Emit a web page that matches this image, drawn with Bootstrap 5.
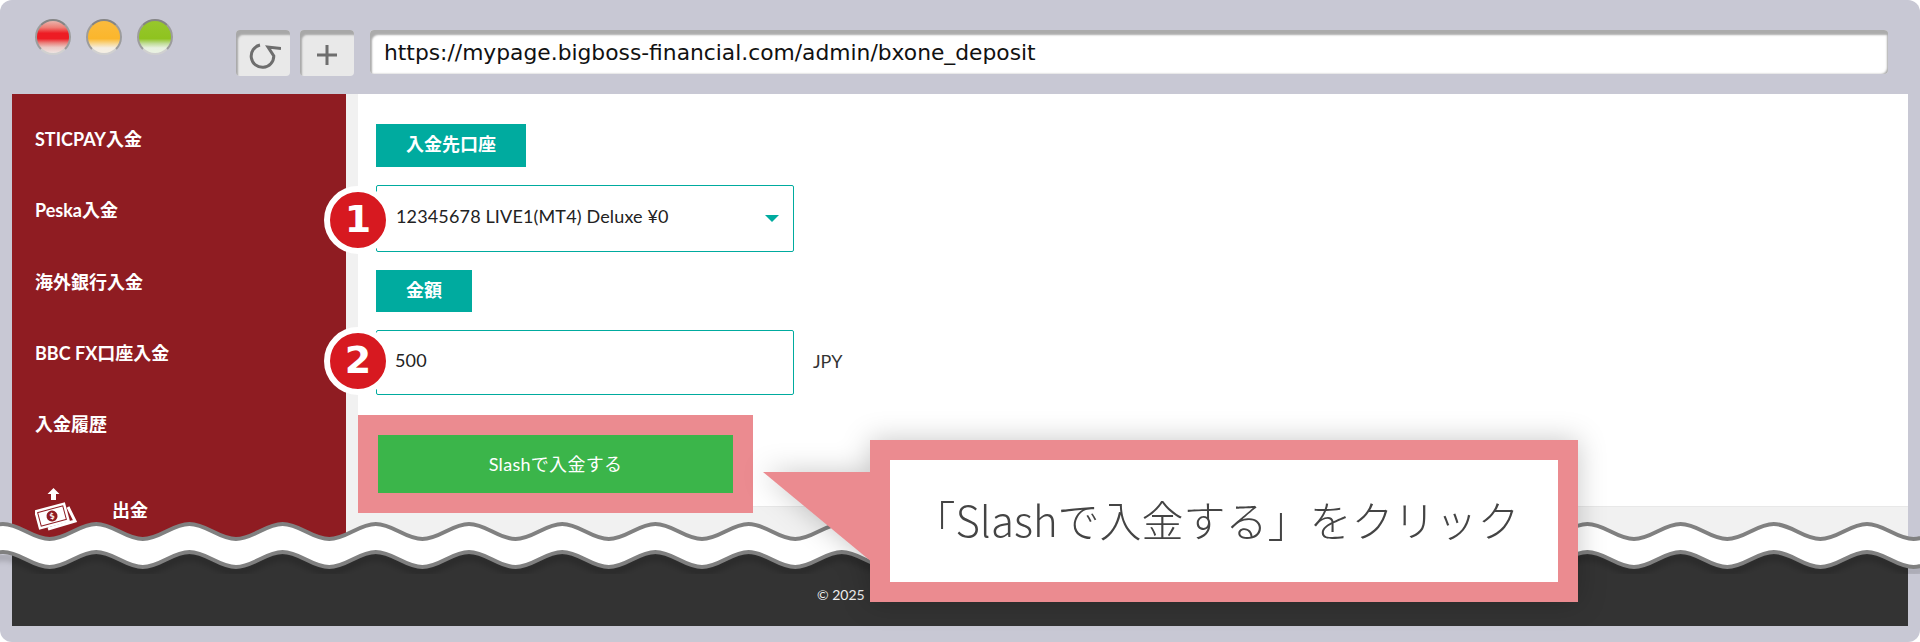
<!DOCTYPE html>
<html lang="ja">
<head>
  <meta charset="UTF-8" />
  <title>bxone_deposit</title>
  <link href="https://cdn.jsdelivr.net/npm/bootstrap@5.3.3/dist/css/bootstrap.min.css" rel="stylesheet"/>
  <style>
    :root {
      --page-font: "Lato", "Noto Sans CJK JP", sans-serif;
      --teal: #00ab9f;
      --pink: #eb8b90;
    }

    body {
      width: 1920px;
      height: 642px;
      overflow: hidden;
      background: #fff;
      font-family: var(--page-font);
    }

    /* browser frame */
    .browser-frame {
      position: relative;
      width: 1920px;
      height: 642px;
      padding: 0 12px 16px;
      background: #c8c8d4;
      border-radius: 12px;
      overflow: hidden;
    }

    .browser-bar { height: 94px; }

    .traffic-lights { width: 224px; padding: 19px 0 0 23px; gap: 15px; }
    .light {
      width: 36px;
      height: 36px;
      border-radius: 50%;
      border: 2px solid;
      border-color: #858585 #9c9c9c #d0d0d0 #9c9c9c;
    }
    .light-red { background: linear-gradient(#e9b4ac 0, #ee7f76 20%, #ed1c24 38%, #ed1c24 55%, #ea7f7a 68%, #ecc8c4 82%, #efe4e2 100%); }
    .light-orange { background: linear-gradient(#fbbb3c 0, #fbb62c 55%, #f8d68c 70%, #f5eee2 84%, #f5efe4 100%); }
    .light-green { background: linear-gradient(#97c72c 0, #8fc31f 55%, #bfdc95 70%, #e8f1e0 84%, #eaf2e2 100%); }

    .bar-btn {
      width: 54px;
      height: 46px;
      margin-top: 30px;
      background: #e9e9e9;
      border-radius: 4px;
      box-shadow: inset 3px 6px 2px -1px #a8a8a8;
    }
    .bar-btn-plus { margin-left: 10px; padding-top: 4px; }
    .address-bar {
      width: 1518px;
      height: 44px;
      margin: 30px 0 0 16px;
      padding: 8px 0 0 14px;
      background: #fff;
      border-radius: 4px;
      box-shadow: inset 4px 7px 2px -2px #acacac, inset -3px -2px 2px -2px #aaa;
      font: 21.8px/30px "DejaVu Sans", sans-serif;
      color: #111;
      white-space: nowrap;
    }

    /* page in the frame */
    .page-body { height: 532px; }
    .page-top { height: 451px; }

    .side-menu {
      width: 334px;
      padding-top: 10px;
      background: #8f1c22;
    }
    .side-link {
      height: 71.25px;
      padding-left: 23px;
      color: #fff;
      font-size: 18px;
      font-weight: 700;
      text-decoration: none;
    }
    .side-link-withdraw { margin-top: 15px; }
    .side-link svg { margin-right: 34px; }

    .main-area {
      flex: 1;
      padding-left: 12px;
      background: #f1f1f1;
    }
    .main-panel {
      height: 413px;
      padding: 30px 0 0 18px;
      background: #fff;
      border-bottom: 1px solid #e8e8e8;
    }

    .field-label {
      width: fit-content;
      height: 43px;
      margin-bottom: 18px;
      padding: 0 30px;
      background: var(--teal);
      color: #fff;
      font-size: 18px;
      font-weight: 700;
      line-height: 41px;
    }
    .amount-label { height: 42px; }
    .select-wrap { width: 418px; }
    .field-box {
      width: 418px;
      border: 1px solid var(--teal);
      border-radius: 2px;
      color: #222;
      font-family: var(--page-font);
      font-size: 18px;
      letter-spacing: .15px;
    }
    .field-box:focus { border-color: var(--teal); box-shadow: none; }
    .deposit-select {
      height: 67px;
      margin-bottom: 18px;
      padding: 0 0 4px 19px;
      background-size: 0 0;
    }
    .select-arrow {
      right: 15px;
      top: 30px;
      width: 0;
      height: 0;
      border-left: 7px solid transparent;
      border-right: 7px solid transparent;
      border-top: 7px solid var(--teal);
    }
    .deposit-input {
      height: 65px;
      padding: 0 0 6px 18px;
    }
    .unit-text { margin: 0 0 2px 19px; color: #333; font-size: 18px; }

    .submit-wrap { width: 355px; margin: 40px 0 0 2px; }
    .submit-btn {
      width: 355px;
      height: 58px;
      background: #3bb54a;
      border: 0;
      border-radius: 0;
      color: #fff;
      font-size: 18px;
      letter-spacing: .3px;
    }

    .page-footer {
      height: 81px;
      padding: 39px 0 0 805px;
      background: #333;
      color: #eee;
      font-size: 14px;
    }

    /* annotations laid over the page */
    .step-badge {
      position: absolute;
      left: 324px;
      width: 68px;
      height: 68px;
      border: 6px solid #fff;
      border-radius: 50%;
      background: #d71920;
      color: #fff;
      font: 700 38px/54px "DejaVu Sans", sans-serif;
      text-align: center;
    }
    .step-one { top: 186px; }
    .step-two { top: 327px; }

    .pink-frame {
      position: absolute;
      inset: -20px;
      border: 20px solid var(--pink);
      pointer-events: none;
    }

    .break-wave { position: absolute; left: 0; top: 500px; }

    .callout {
      position: absolute;
      left: 870px;
      top: 440px;
      width: 708px;
      height: 162px;
      filter: drop-shadow(0 0 14px rgba(0, 0, 0, .22));
    }
    .callout-tail {
      position: absolute;
      left: -107px;
      top: 32px;
      width: 110px;
      height: 91px;
      background: var(--pink);
      clip-path: polygon(0 0, 100% 0, 100% 100%);
    }
    .callout-box {
      position: relative;
      height: 100%;
      padding-right: 15px;
      border: 20px solid var(--pink);
      background: #fff;
      color: #444;
      font: 300 42px/118px "Noto Sans CJK JP", sans-serif;
      text-align: center;
      white-space: nowrap;
    }
  </style>
</head>
<body>

  <div class="browser-frame">
    <div class="browser-bar d-flex">
      <div class="traffic-lights d-flex">
        <span class="light light-red"></span>
        <span class="light light-orange"></span>
        <span class="light light-green"></span>
      </div>
      <div class="bar-btn d-flex align-items-center justify-content-center">
        <svg width="36" height="36" viewBox="0 0 36 36" fill="none" stroke="#6e6e6e" stroke-width="3">
          <path d="M15 10A11.300 11.300 0 1 0 28.800 21L23 12L36 13.500"/>
        </svg>
      </div>
      <div class="bar-btn bar-btn-plus d-flex align-items-center justify-content-center">
        <svg width="22" height="22" viewBox="0 0 22 22" stroke="#6e6e6e" stroke-width="3"><path d="M11 1v20M1 11h20"/></svg>
      </div>
      <div class="address-bar">https://mypage.bigboss-financial.com/admin/bxone_deposit</div>
    </div>

    <div class="page-body">
      <div class="page-top d-flex">
        <nav class="side-menu d-flex flex-column">
          <a class="side-link d-flex flex-shrink-0 align-items-center" href="#">STICPAY入金</a>
          <a class="side-link d-flex flex-shrink-0 align-items-center" href="#">Peska入金</a>
          <a class="side-link d-flex flex-shrink-0 align-items-center" href="#">海外銀行入金</a>
          <a class="side-link d-flex flex-shrink-0 align-items-center" href="#">BBC FX口座入金</a>
          <a class="side-link d-flex flex-shrink-0 align-items-center" href="#">入金履歴</a>
          <a class="side-link side-link-withdraw d-flex flex-shrink-0 align-items-center" href="#">
            <svg width="43" height="50" viewBox="0 0 43 50">
              <path d="M18.500 2l-6 6h3.500v6h5V8h3.500z" fill="#fff"/>
              <path d="M33 21l7 14-27 8" fill="none" stroke="#fff" stroke-width="3"/>
              <g transform="rotate(-15 17 30)">
                <rect x="1" y="20" width="32" height="20" fill="#fff"/>
                <rect x="4" y="23" width="26" height="14" fill="none" stroke="#8f1c22"/>
                <circle cx="17" cy="30" r="5.500" fill="#8f1c22"/>
                <text x="17" y="33" fill="#fff" font-size="8" font-weight="700" text-anchor="middle">$</text>
              </g>
            </svg>
            出金
          </a>
        </nav>
        <main class="main-area">
          <div class="main-panel">
            <div class="field-label">入金先口座</div>
            <div class="select-wrap position-relative">
              <select class="form-select field-box deposit-select">
                <option>12345678 LIVE1(MT4) Deluxe ¥0</option>
              </select>
              <span class="select-arrow position-absolute"></span>
            </div>
            <div class="field-label amount-label">金額</div>
            <div class="d-flex align-items-center">
              <input class="form-control field-box deposit-input" type="text" value="500">
              <span class="unit-text">JPY</span>
            </div>
            <div class="submit-wrap position-relative">
              <button class="btn submit-btn" type="button">Slashで入金する</button>
              <span class="pink-frame"></span>
            </div>
          </div>
        </main>
      </div>
      <footer class="page-footer">© 2025</footer>
    </div>

    <span class="step-badge step-one">1</span>
    <span class="step-badge step-two">2</span>

    <svg class="break-wave" width="1920" height="100" viewBox="0 500 1920 100">
      <defs><filter id="waveBlur"><feGaussianBlur stdDeviation="3"/></filter></defs>
      <path id="waveShadow" fill="none" stroke="#000" stroke-opacity=".25" stroke-width="5" filter="url(#waveBlur)" transform="translate(0 5)"/>
      <path id="waveBand" fill="#fff"/>
      <path id="waveTop" fill="none" stroke="#808080" stroke-width="4"/>
      <path id="waveBottom" fill="none" stroke="#808080" stroke-width="4"/>
    </svg>

    <div class="callout">
      <span class="callout-tail"></span>
      <div class="callout-box">「Slashで入金する」をクリック</div>
    </div>
  </div>

  <script src="https://cdn.jsdelivr.net/npm/bootstrap@5.3.3/dist/js/bootstrap.bundle.min.js"></script>
  <script>
    // torn-page wave: troughs and crests half a period apart, one crest on x=3
    const half = 46.6, amp = 7.5, count = 44, startX = -43.6, topY = 531.5, gap = 28;

    function wavePath(y, reverse) {
      let pts = Array.from({ length: count + 1 }, (_, i) => [startX + i * half, y + (i % 2 ? -amp : amp)]);
      if (reverse) pts.reverse();
      const bend = (reverse ? -half : half) * 0.3642;
      let d = `M${pts[0][0]} ${pts[0][1]}`;
      for (let i = 1; i < pts.length; i++) {
        const [x0, y0] = pts[i - 1], [x1, y1] = pts[i];
        d += `C${x0 + bend} ${y0} ${x1 - bend} ${y1} ${x1} ${y1}`;
      }
      return d;
    }

    const upper = wavePath(topY), lower = wavePath(topY + gap);
    document.getElementById('waveTop').setAttribute('d', upper);
    document.getElementById('waveBottom').setAttribute('d', lower);
    document.getElementById('waveShadow').setAttribute('d', lower);
    document.getElementById('waveBand').setAttribute('d', upper + wavePath(topY + gap, true).replace('M', 'L') + 'Z');
  </script>
</body>
</html>
